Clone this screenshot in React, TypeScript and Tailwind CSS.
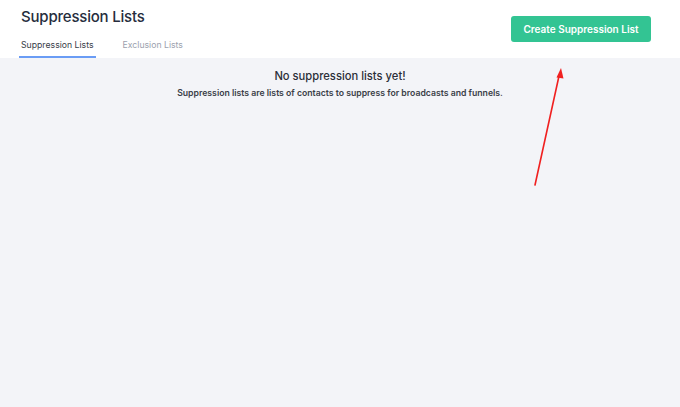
export default function App() {
  return (
    <div
      className="relative flex h-[407px] w-[680px] flex-col bg-[#f3f4f8]"
      style={{ fontFamily: 'Inter, "Noto Sans", sans-serif' }}
    >
      <header className="flex items-start justify-between bg-white pl-[21px] pr-[29px]">
        <div className="flex flex-col">
          <h1 className="mt-[7px] text-[15px] leading-[20px] font-medium tracking-[-0.2px] text-[#262d3d]">
            Suppression Lists
          </h1>
          <nav className="mt-[12px] flex gap-[27px] text-[8.7px] leading-[13px]">
            <a className="-ml-[2px] border-b-2 border-[#6a9cf5] px-[2px] pb-[4px] text-[#383d48]">Suppression Lists</a>
            <a className="pb-[4px] text-[#9ba1ae]">Exclusion Lists</a>
          </nav>
        </div>
        <button className="mt-[16px] h-[26px] w-[140px] rounded-[3px] bg-[#33c493] text-[10px] font-semibold text-white">
          Create Suppression List
        </button>
      </header>
      <main className="flex flex-col items-center pt-[11px]">
        <h2 className="text-[11.2px] leading-[15px] font-medium text-[#2b2f38]">No suppression lists yet!</h2>
        <p className="mt-[3px] text-[8.7px] leading-[12px] font-semibold text-[#3b3f48]">
          Suppression lists are lists of contacts to suppress for broadcasts and funnels.
        </p>
      </main>
      <svg className="absolute top-0 left-0" width="680" height="407" viewBox="0 0 680 407">
        <line x1="535" y1="185" x2="559" y2="76" stroke="#f02020" strokeWidth="1.6" strokeLinecap="round" />
        <polygon points="561,68 556.5,77.5 563.5,78.5" fill="#f02020" />
      </svg>
    </div>
  );
}
